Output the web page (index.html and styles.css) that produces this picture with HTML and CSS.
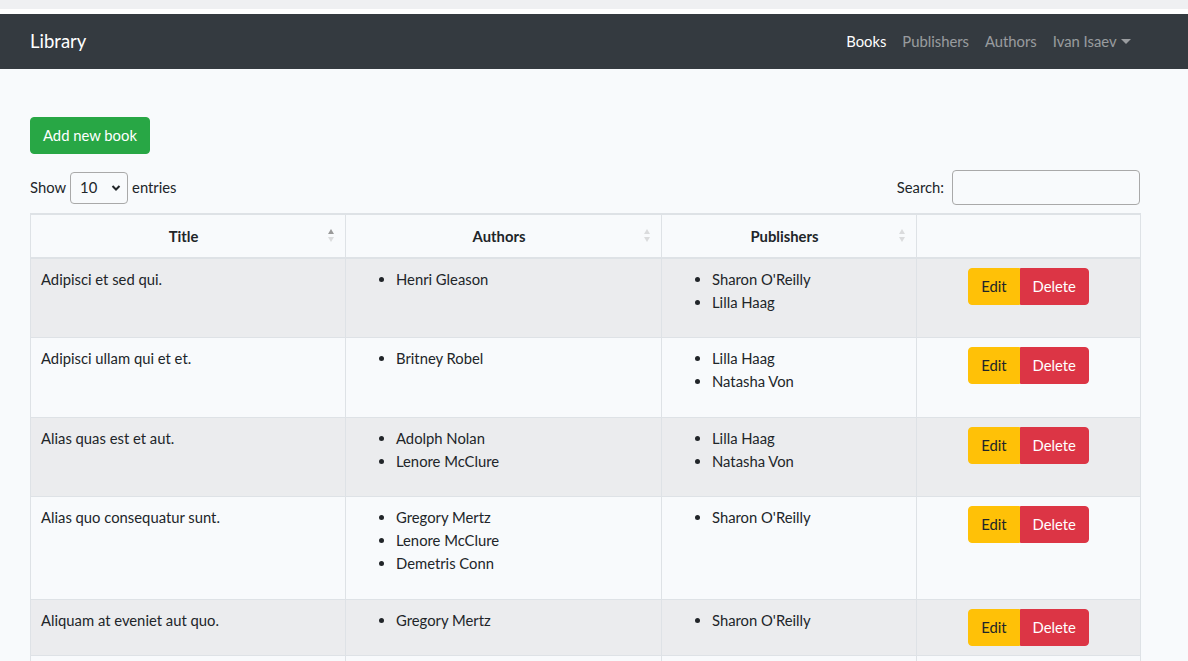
FILE: index.html
```html
<!DOCTYPE html>
<html>
<head>
<meta charset="utf-8">
<link rel="stylesheet" href="styles.css">
</head>
<body>
<div class="topstrip"></div>
<nav class="navbar">
  <a class="brand">Library</a>
  <ul class="nav">
    <li class="active">Books</li>
    <li>Publishers</li>
    <li>Authors</li>
    <li class="dropdown">Ivan Isaev <span class="caret"></span></li>
  </ul>
</nav>
<main class="content">
  <button class="btn btn-success">Add new book</button>
  <div class="dt-top">
    <label class="length">Show <span class="select">10 <svg width="10" height="8" viewBox="0 0 10 8"><path d="M1.5 2 L5 5.5 L8.5 2" fill="none" stroke="#212529" stroke-width="2"/></svg></span> entries</label>
    <label class="search">Search: <span class="input"></span></label>
  </div>
  <table class="table">
    <colgroup>
      <col style="width:315px"><col style="width:316px"><col style="width:255px"><col style="width:224px">
    </colgroup>
    <thead>
      <tr>
        <th class="sort asc">Title<span class="arrows"><i class="up"></i><i class="down"></i></span></th>
        <th class="sort">Authors<span class="arrows"><i class="up"></i><i class="down"></i></span></th>
        <th class="sort">Publishers<span class="arrows"><i class="up"></i><i class="down"></i></span></th>
        <th></th>
      </tr>
    </thead>
    <tbody>
      <tr class="odd">
        <td>Adipisci et sed qui.</td>
        <td><ul><li>Henri Gleason</li></ul></td>
        <td><ul><li>Sharon O'Reilly</li><li>Lilla Haag</li></ul></td>
        <td class="actions"><div class="btn-group"><button class="btn btn-warning">Edit</button><button class="btn btn-danger">Delete</button></div></td>
      </tr>
      <tr>
        <td>Adipisci ullam qui et et.</td>
        <td><ul><li>Britney Robel</li></ul></td>
        <td><ul><li>Lilla Haag</li><li>Natasha Von</li></ul></td>
        <td class="actions"><div class="btn-group"><button class="btn btn-warning">Edit</button><button class="btn btn-danger">Delete</button></div></td>
      </tr>
      <tr class="odd">
        <td>Alias quas est et aut.</td>
        <td><ul><li>Adolph Nolan</li><li>Lenore McClure</li></ul></td>
        <td><ul><li>Lilla Haag</li><li>Natasha Von</li></ul></td>
        <td class="actions"><div class="btn-group"><button class="btn btn-warning">Edit</button><button class="btn btn-danger">Delete</button></div></td>
      </tr>
      <tr>
        <td>Alias quo consequatur sunt.</td>
        <td><ul><li>Gregory Mertz</li><li>Lenore McClure</li><li>Demetris Conn</li></ul></td>
        <td><ul><li>Sharon O'Reilly</li></ul></td>
        <td class="actions"><div class="btn-group"><button class="btn btn-warning">Edit</button><button class="btn btn-danger">Delete</button></div></td>
      </tr>
      <tr class="odd">
        <td>Aliquam at eveniet aut quo.</td>
        <td><ul><li>Gregory Mertz</li></ul></td>
        <td><ul><li>Sharon O'Reilly</li></ul></td>
        <td class="actions"><div class="btn-group"><button class="btn btn-warning">Edit</button><button class="btn btn-danger">Delete</button></div></td>
      </tr>
      <tr class="empty">
        <td></td>
        <td></td>
        <td></td>
        <td></td>
      </tr>
    </tbody>
  </table>
</main>
</body>
</html>
```

FILE: styles.css
```css
html, body {
  margin: 0;
  padding: 0;
}
body {
  background: #f8fafc;
  color: #212529;
  font-family: "Lato", "Noto Sans", sans-serif;
  font-size: 14.8px;
  line-height: 23px;
  overflow: hidden;
}
.topstrip {
  height: 9px;
  background: #eff0f2;
  border-bottom: 5px solid #ffffff;
}
.navbar {
  height: 55px;
  background: #343a40;
  display: flex;
  align-items: center;
  justify-content: space-between;
  padding: 0 57px 0 30px;
}
.brand {
  color: #fff;
  font-size: 18.5px;
}
.nav {
  list-style: none;
  margin: 0;
  padding: 0;
  display: flex;
  gap: 16px;
}
.nav li {
  color: rgba(255, 255, 255, 0.5);
}
.nav li.active {
  color: #fff;
}
.caret {
  display: inline-block;
  width: 0;
  height: 0;
  border-left: 5px solid transparent;
  border-right: 5px solid transparent;
  border-top: 5px solid rgba(255, 255, 255, 0.5);
  vertical-align: 3px;
  margin-left: 1px;
}
.content {
  width: 1110px;
  padding: 48px 0 0 30px;
}
.btn {
  font-family: inherit;
  font-size: 14.8px;
  line-height: 23px;
  padding: 6px 12px;
  border: 1px solid transparent;
  border-radius: 4px;
  cursor: pointer;
}
.btn-success {
  background: #28a745;
  border-color: #28a745;
  color: #fff;
}
.btn-warning {
  background: #ffc107;
  border-color: #ffc107;
  color: #212529;
}
.btn-danger {
  background: #dc3545;
  border-color: #dc3545;
  color: #fff;
}
.dt-top {
  display: flex;
  justify-content: space-between;
  align-items: center;
  margin-top: 16px;
  margin-bottom: 8px;
}
.length, .search {
  display: flex;
  align-items: center;
  gap: 4px;
}
.select {
  box-sizing: border-box;
  width: 58px;
  height: 32px;
  border: 1px solid #a9a9a9;
  border-radius: 4px;
  background: #f8fafc;
  display: flex;
  align-items: center;
  justify-content: space-between;
  padding: 0 6px 0 9px;
}
.search {
  gap: 8px;
}
.input {
  box-sizing: border-box;
  width: 188px;
  height: 35px;
  border: 1px solid #a9a9a9;
  border-radius: 4px;
  background: #f8fafc;
}
.table {
  border-collapse: collapse;
  table-layout: fixed;
  width: 1110px;
  border-top: 2px solid #dee2e6;
}
.table th, .table td {
  border: 1px solid #dee2e6;
  vertical-align: top;
}
.table th {
  position: relative;
  font-weight: bold;
  text-align: center;
  padding: 10px 10px 9px;
  border-top: 0;
  border-bottom: 2px solid #dee2e6;
}
.table th.sort {
  padding-right: 19px;
}
.table td {
  padding: 9px 10px;
  text-align: left;
}
.table tr.empty td {
  height: 40px;
}
.table tr.odd td {
  background: #ebecee;
}
.table ul {
  margin: 0 0 14.4px 0;
  padding-left: 40px;
}
.table td.actions {
  text-align: center;
}
.btn-group {
  display: inline-flex;
}
.btn-group .btn {
  border-radius: 0;
}
.btn-group .btn:first-child {
  border-radius: 4px 0 0 4px;
}
.btn-group .btn:last-child {
  border-radius: 0 4px 4px 0;
}
.arrows {
  position: absolute;
  right: 11px;
  top: 14px;
  display: flex;
  flex-direction: column;
  gap: 3px;
}
.arrows i {
  display: block;
  width: 0;
  height: 0;
  border-left: 3.5px solid transparent;
  border-right: 3.5px solid transparent;
}
.arrows .up {
  border-bottom: 5px solid #dadbdd;
}
.arrows .down {
  border-top: 5px solid #dadbdd;
}
.asc .arrows .up {
  border-bottom-color: #9a9a9a;
}
```
